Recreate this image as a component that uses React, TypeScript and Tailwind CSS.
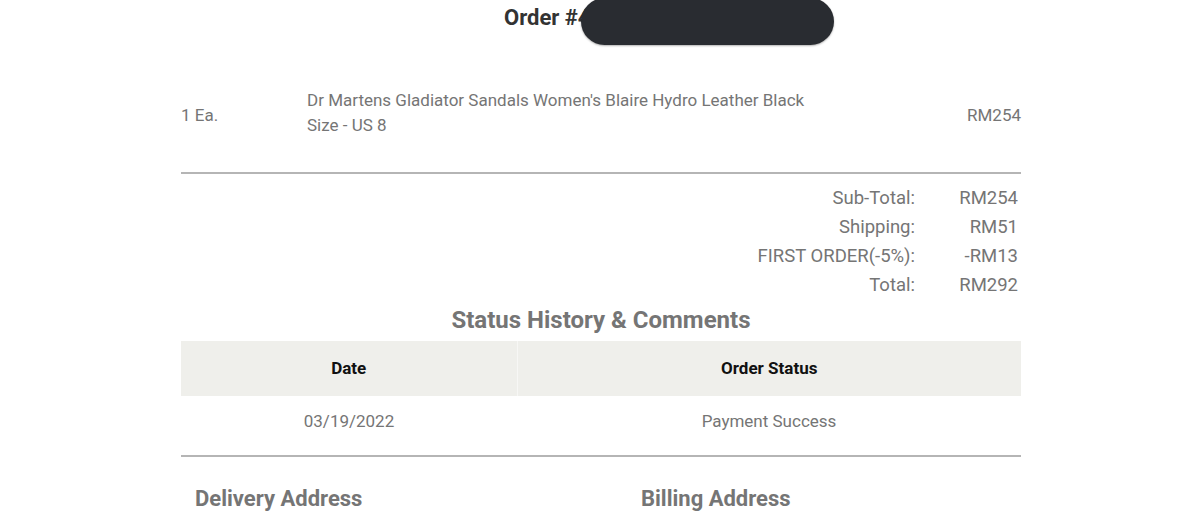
export default function App() {
  return (
    <div className="min-h-screen bg-white font-['Roboto',sans-serif] text-[#757575]">
      <div className="mx-auto w-[840px] translate-x-[1px]">
        <div className="relative h-[40px] flex pl-[323px] pt-[4px]">
          <h1 className="text-[22px] leading-[28px] font-bold text-[#333]">Order #4</h1>
          <div className="absolute left-[400px] top-[-2px] h-[47px] w-[253px] rounded-full bg-[#292c31] shadow-[0_1px_2px_rgba(0,0,0,0.3)]" />
        </div>

        <div className="flex items-center pt-[48px] pb-[34px] text-[17px] leading-[25px]">
          <div className="w-[126px] pt-[4px]">1 Ea.</div>
          <div className="flex-1">
            Dr Martens Gladiator Sandals Women's Blaire Hydro Leather Black
            <br />
            Size - US 8
          </div>
          <div className="pt-[4px]">RM254</div>
        </div>

        <div className="border-t-2 border-[#b5b5b5]" />

        <div className="flex flex-col items-end pt-[10px] text-[18.5px] leading-[29px]">
          {[
            ['Sub-Total:', 'RM254'],
            ['Shipping:', 'RM51'],
            ['FIRST ORDER(-5%):', '-RM13'],
            ['Total:', 'RM292'],
          ].map(([label, value]) => (
            <div key={label} className="flex">
              <span className="text-right">{label}</span>
              <span className="w-[106px] text-right pr-[3px]">{value}</span>
            </div>
          ))}
        </div>

        <h2 className="text-center text-[24px] leading-[30px] font-bold mt-[5px] mb-[6px]">
          Status History &amp; Comments
        </h2>

        <table className="w-full border-collapse text-[17px]">
          <thead>
            <tr className="bg-[#efefeb] h-[55px]">
              <th className="w-[336px] font-bold text-[#111] border-r border-[#f7f7f5]">Date</th>
              <th className="font-bold text-[#111]">Order Status</th>
            </tr>
          </thead>
          <tbody>
            <tr className="h-[60px] border-b-2 border-[#b5b5b5]">
              <td className="text-center pb-[8px]">03/19/2022</td>
              <td className="text-center pb-[8px]">Payment Success</td>
            </tr>
          </tbody>
        </table>

        <div className="flex pt-[28px] text-[22px] leading-[28px] font-bold">
          <div className="w-[460px] pl-[14px]">Delivery Address</div>
          <div>Billing Address</div>
        </div>
      </div>
    </div>
  );
}
